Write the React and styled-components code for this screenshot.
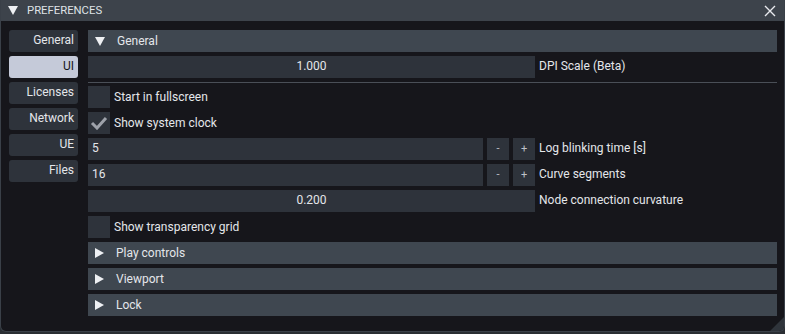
import React from "react";
import styled, { createGlobalStyle } from "styled-components";

const GlobalStyle = createGlobalStyle`
  html, body {
    margin: 0;
    padding: 0;
    background: #2a2e33;
  }
  body {
    font-family: Roboto, Lato, "Noto Sans", sans-serif;
    font-size: 12px;
    color: #e4e6ea;
  }
`;

const tabs = ["General", "UI", "Licenses", "Network", "UE", "Files"];
const collapsed = ["Play controls", "Viewport", "Lock"];

const DownArrow = () => (
  <svg width="10" height="9" viewBox="0 0 10 9">
    <polygon points="0,0 10,0 5,9" fill="#eef0f3" />
  </svg>
);

const RightArrow = () => (
  <svg width="9" height="10" viewBox="0 0 9 10">
    <polygon points="0,0 9,5 0,10" fill="#eef0f3" />
  </svg>
);

const CloseIcon = () => (
  <svg width="12" height="12" viewBox="0 0 12 12">
    <path d="M1 1 L11 11 M11 1 L1 11" stroke="#e8eaee" strokeWidth="1.4" />
  </svg>
);

const CheckMark = () => (
  <svg width="18" height="14" viewBox="0 0 18 14">
    <path d="M2 7 L7 12 L16 2" stroke="#9ea2aa" strokeWidth="3" fill="none" />
  </svg>
);

const Checkbox = ({ checked, label }) => (
  <CheckRow>
    <Box>{checked && <CheckMark />}</Box>
    <span>{label}</span>
  </CheckRow>
);

const App = () => {
  return (
    <>
      <GlobalStyle />
      <Window>
        <TitleBar>
          <TitleLeft>
            <DownArrow />
            <span>PREFERENCES</span>
          </TitleLeft>
          <CloseIcon />
        </TitleBar>
        <Body>
          <Sidebar>
            {tabs.map((t) => (
              <Tab key={t} active={t === "UI"}>
                {t}
              </Tab>
            ))}
          </Sidebar>
          <Main>
            <Header>
              <DownArrow />
              <span>General</span>
            </Header>
            <Row>
              <Input align="center">1.000</Input>
              <Label>DPI Scale (Beta)</Label>
            </Row>
            <Separator />
            <Checkbox label="Start in fullscreen" />
            <Checkbox checked label="Show system clock" />
            <Row>
              <Stepper>
                <Input>5</Input>
                <StepButton>-</StepButton>
                <StepButton>+</StepButton>
              </Stepper>
              <Label>Log blinking time [s]</Label>
            </Row>
            <Row>
              <Stepper>
                <Input>16</Input>
                <StepButton>-</StepButton>
                <StepButton>+</StepButton>
              </Stepper>
              <Label>Curve segments</Label>
            </Row>
            <Row>
              <Input align="center">0.200</Input>
              <Label>Node connection curvature</Label>
            </Row>
            <Checkbox label="Show transparency grid" />
            {collapsed.map((c) => (
              <Header key={c}>
                <RightArrow />
                <span>{c}</span>
              </Header>
            ))}
          </Main>
        </Body>
        <Grip />
      </Window>
    </>
  );
};

export default App;

const Window = styled.div`
  position: relative;
  width: 785px;
  height: 332px;
  box-sizing: border-box;
  background: #16161b;
  border: 1px solid #3a4048;
  border-top: none;
  border-radius: 0 0 6px 6px;
  overflow: hidden;
`;

const TitleBar = styled.div`
  height: 21px;
  background: #3d434b;
  display: flex;
  align-items: center;
  justify-content: space-between;
  padding: 0 8px 0 7px;
`;

const TitleLeft = styled.div`
  display: flex;
  align-items: center;
  gap: 9px;
  color: #dfe2e6;
  font-size: 11.3px;
`;

const Body = styled.div`
  display: flex;
  gap: 10px;
  padding: 9px 7px 0 8px;
`;

const Sidebar = styled.div`
  width: 69px;
  display: flex;
  flex-direction: column;
  gap: 4px;
`;

const Tab = styled.div`
  height: 22px;
  line-height: 21px;
  border-radius: 3px;
  text-align: right;
  padding-right: 4px;
  background: ${(p) => (p.active ? "#c5cad9" : "#2e333b")};
  color: ${(p) => (p.active ? "#15161a" : "#e4e6ea")};
`;

const Main = styled.div`
  flex: 1;
  display: flex;
  flex-direction: column;
  gap: 4px;
`;

const Header = styled.div`
  height: 22px;
  background: #3f4750;
  display: flex;
  align-items: center;
  gap: 12px;
  padding-left: 7px;
  line-height: 21px;
`;

const Row = styled.div`
  display: grid;
  grid-template-columns: 447px 1fr;
  gap: 4px;
  height: 22px;
`;

const Stepper = styled.div`
  display: flex;
  gap: 4px;
`;

const Input = styled.div`
  flex: 1;
  height: 22px;
  line-height: 21px;
  background: #2e333b;
  padding: 0 4px;
  text-align: ${(p) => p.align || "left"};
`;

const StepButton = styled.div`
  width: 22px;
  height: 22px;
  line-height: 21px;
  text-align: center;
  background: #2e333b;
  color: #bfc2c8;
  font-size: 11px;
`;

const Label = styled.div`
  line-height: 21px;
  white-space: nowrap;
`;

const Separator = styled.div`
  height: 1px;
  background: #4a4f57;
  margin-bottom: -1px;
`;

const CheckRow = styled.div`
  display: flex;
  align-items: center;
  gap: 4px;
  height: 22px;
  line-height: 21px;
`;

const Box = styled.div`
  width: 22px;
  height: 22px;
  background: #2e333b;
  display: flex;
  align-items: center;
  justify-content: center;
`;

const Grip = styled.div`
  position: absolute;
  right: 0;
  bottom: 0;
  width: 0;
  height: 0;
  border-left: 14px solid transparent;
  border-bottom: 14px solid #2f343b;
`;
